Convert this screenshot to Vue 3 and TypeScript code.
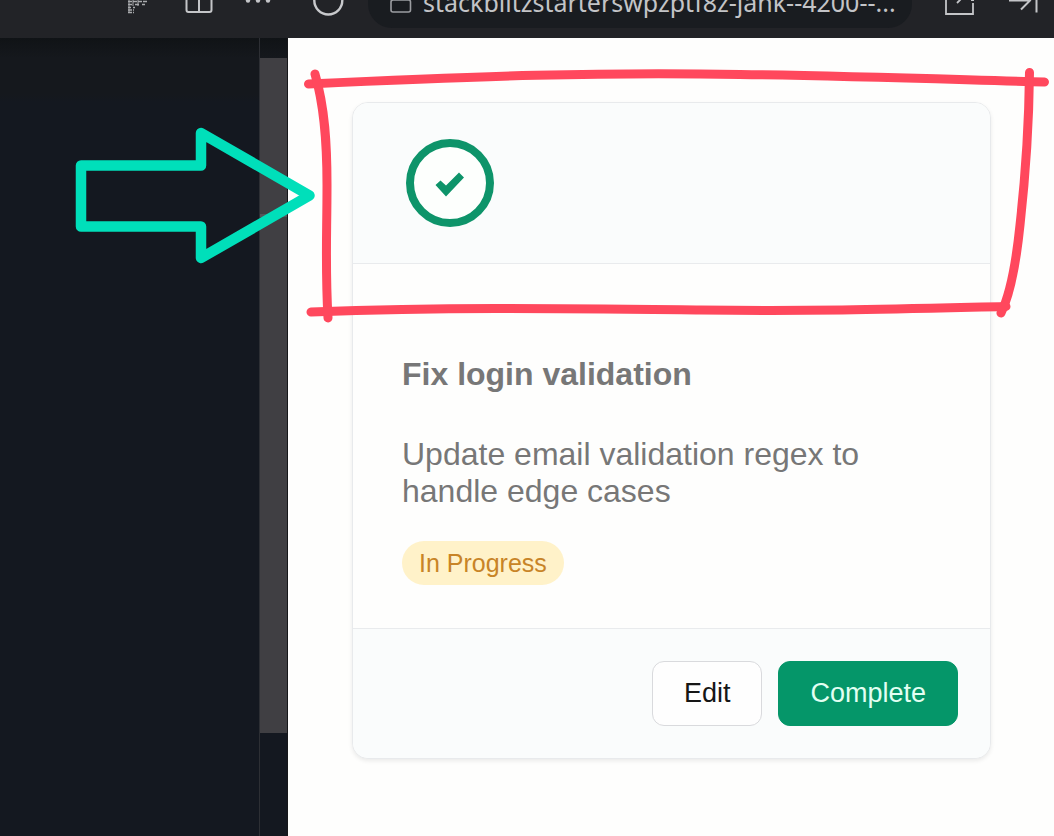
<script setup lang="ts">
interface Task {
  title: string
  description: string
  status: string
}

const address = 'stackblitzstarterswpzptf8z-jank--4200--...'

const task: Task = {
  title: 'Fix login validation',
  description: 'Update email validation regex to handle edge cases',
  status: 'In Progress',
}
</script>

<template>
  <div class="screen">
    <header class="toolbar">
      <button class="tool" type="button" aria-label="Extension">
        <svg viewBox="0 -28 32 56" fill="none" stroke="#a9aaad" stroke-width="1.6">
          <path d="M8 1.5H27M8 4.5H13M15 4.5H20M22 4.5H25M8 7.5H11M13 7.5H15M8 10H14M8 12.5H14" stroke-dasharray="4 1" />
          <path d="M9 0V13M13 0V6M18 0V6" stroke-width="1" />
        </svg>
      </button>
      <button class="tool" type="button" aria-label="Split view">
        <svg viewBox="0 -28 32 56" fill="none" stroke="#c4c5c8" stroke-width="2">
          <rect x="2.5" y="-12" width="25" height="24" rx="2" />
          <path d="M15 -12V12" />
        </svg>
      </button>
      <button class="tool" type="button" aria-label="More">
        <svg viewBox="0 -28 32 56" fill="#c4c5c8">
          <circle cx="0" cy="0.5" r="2.2" />
          <circle cx="10" cy="0.5" r="2.2" />
          <circle cx="20" cy="0.5" r="2.2" />
        </svg>
      </button>
      <button class="tool" type="button" aria-label="Reload">
        <svg viewBox="0 -28 32 56" fill="none" stroke="#c8c9cc" stroke-width="2.4">
          <circle cx="16.3" cy="0.5" r="14" />
        </svg>
      </button>
      <button class="address" type="button">
        <svg class="lock" viewBox="0 -28 24 56" fill="none" stroke="#9b9da1" stroke-width="1.6">
          <rect x="1" y="0" width="19.5" height="12" rx="2" />
        </svg>
        <span>{{ address }}</span>
      </button>
      <button class="tool" type="button" aria-label="Open in new window">
        <svg viewBox="0 -28 32 56" fill="none" stroke="#c4c5c8" stroke-width="1.8">
          <path d="M10 -14H2V14H29V3M13 3L28 -12M27 0H30" />
        </svg>
      </button>
      <button class="tool" type="button" aria-label="Collapse panel">
        <svg viewBox="0 -28 32 56" fill="none" stroke="#c4c5c8" stroke-width="2">
          <path d="M1 0.5H22M13 -8.5L22 0.5L13 9.5M28.5 -12V12.5" />
        </svg>
      </button>
    </header>

    <div class="workspace">
      <aside class="editor">
        <div class="code"></div>
        <div class="scrollbar">
          <div class="thumb"><div class="marker"></div></div>
        </div>
      </aside>

      <main class="preview">
        <article class="card">
          <div class="card-header">
            <svg class="done" viewBox="0 0 88 88">
              <circle cx="44" cy="44" r="40" fill="#fdfffd" stroke="#0e946a" stroke-width="8" />
              <path d="M29.5 46L34.5 41.5L40 46.5L53 33.5L58 38.5L40 57.5Z" fill="#0e946a" />
            </svg>
          </div>
          <div class="card-body">
            <h2>{{ task.title }}</h2>
            <p>{{ task.description }}</p>
            <span class="badge">{{ task.status }}</span>
          </div>
          <footer class="card-footer">
            <button class="btn" type="button">Edit</button>
            <button class="btn primary" type="button">Complete</button>
          </footer>
        </article>
      </main>
    </div>

    <svg class="annotations" viewBox="0 0 1054 836" fill="none" stroke-linecap="round" stroke-linejoin="round" aria-hidden="true">
      <path d="M81 165.500H201V133L309.500 195.500L201 258V226.500H81Z" stroke="#00dfba" stroke-width="10.500" />
      <g stroke="#ff485d" stroke-width="9">
        <path d="M308.500 84C480 76 600 72 740 74.500C850 76 950 79.500 1044.500 82" />
        <path d="M315 74C325 108 327 145 327 185C327 235 325 265 328 318" />
        <path d="M311 312C450 307 560 308.500 700 310C820 311.500 900 309 1006 306.500" />
        <path d="M1029.500 72.500C1029 120 1025 180 1020 225C1016 264 1009 297 1001 313" />
      </g>
    </svg>
  </div>
</template>

<style>
body {
  margin: 0;
}
</style>

<style scoped>
.screen {
  position: relative;
  display: flex;
  flex-direction: column;
  min-height: 100vh;
  overflow: hidden;
  background: #fefefd;
  font-family: "Liberation Sans", Arial, sans-serif;
}

button {
  margin: 0;
  font-family: inherit;
}

.toolbar {
  display: flex;
  align-items: flex-end;
  gap: 32px;
  box-sizing: border-box;
  height: 38px;
  padding: 0 14px 10px 120px;
  overflow: hidden;
  background: #222327;
}

.tool {
  flex: none;
  width: 32px;
  height: 56px;
  padding: 0;
  border: 0;
  background: none;
}

.tool svg {
  display: block;
  width: 32px;
  height: 56px;
  overflow: visible;
}

.address {
  display: flex;
  flex: 1;
  align-items: center;
  gap: 9px;
  min-width: 0;
  height: 56px;
  margin-left: -8px;
  padding: 0 12px 0 22px;
  border: 0;
  border-radius: 24px;
  background: #191c20;
  color: #c3c4c7;
  font-family: "Noto Sans", sans-serif;
  font-size: 25px;
  line-height: 32px;
  text-align: left;
  white-space: nowrap;
}

.address span {
  padding-top: 4px;
}

.lock {
  flex: none;
  width: 24px;
  height: 56px;
}

.workspace {
  display: flex;
  flex: 1;
}

.editor {
  display: flex;
  flex: none;
  width: 288px;
  background: linear-gradient(#101316, #15181d 20px, #15181d 56px, #141820 64px);
}

.code {
  flex: 1;
}

.scrollbar {
  box-sizing: border-box;
  flex: none;
  width: 29px;
  padding-top: 20px;
  border-left: 1px solid #2d2f34;
  border-right: 1px solid #16171a;
}

.thumb {
  box-sizing: border-box;
  height: 675px;
  padding-top: 156px;
  background: #403f43;
}

.marker {
  height: 3px;
  background: #55555a;
}

.preview {
  flex: 1;
  padding: 64px 63px 64px 64px;
}

.card {
  overflow: hidden;
  border: 1px solid #e8eaec;
  border-radius: 16px;
  background: #fefefd;
  box-shadow: 0 2px 4px rgba(0, 0, 0, 0.08);
}

.card-header {
  padding: 36px 53px;
  border-bottom: 1px solid #e9ebed;
  background: #fafcfc;
}

.done {
  display: block;
  width: 88px;
  height: 88px;
}

.card-body {
  padding: 92px 49px 43px;
  color: #777777;
  font-size: 32px;
  line-height: 37px;
}

h2 {
  margin: 0 0 43px;
  font-size: 32px;
  font-weight: 700;
}

p {
  margin: 0 0 31px;
}

.badge {
  display: block;
  width: fit-content;
  padding: 0 17px;
  border-radius: 22px;
  background: #fff2c9;
  color: #c88427;
  font-size: 25px;
  line-height: 44px;
}

.card-footer {
  display: flex;
  justify-content: flex-end;
  gap: 16px;
  padding: 32px;
  border-top: 1px solid #e9ebed;
  background: #fafcfc;
}

.btn {
  padding: 0 31px;
  border: 1px solid #d9dadd;
  border-radius: 12px;
  background: #fefefe;
  color: #161616;
  font-size: 27px;
  line-height: 63px;
}

.btn.primary {
  border-color: #059669;
  background: #059669;
  color: #e2fff2;
}

.annotations {
  position: absolute;
  top: 0;
  left: 0;
  width: 1054px;
  height: 836px;
  pointer-events: none;
}
</style>
